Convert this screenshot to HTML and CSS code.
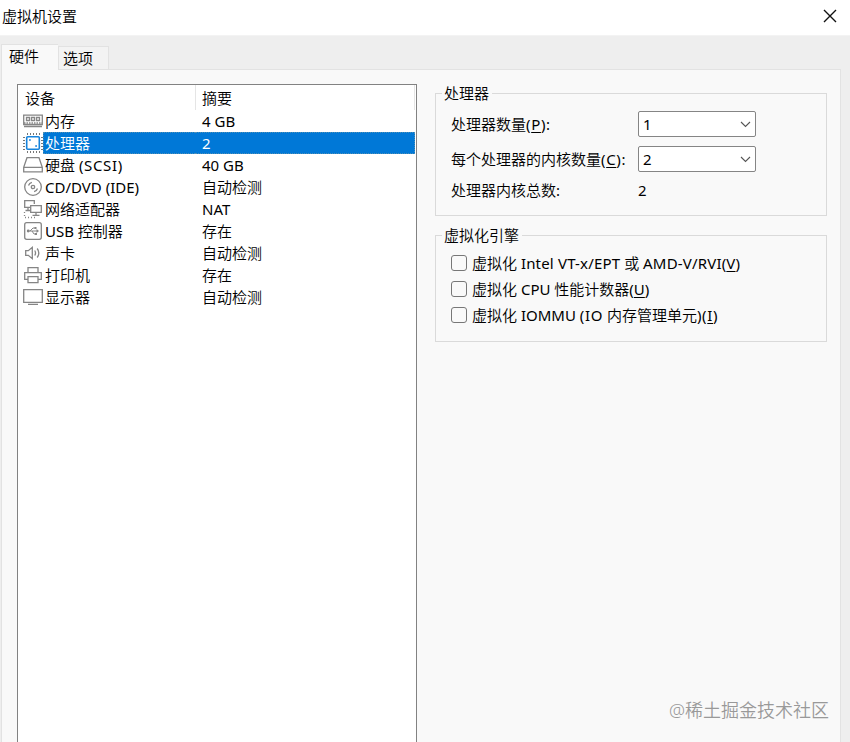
FILE: index.html
```
<!DOCTYPE html>
<html lang="zh-CN">
<head>
    <meta charset="UTF-8">
    <title>虚拟机设置</title>
    <link rel="stylesheet" href="styles.css">
</head>
<body>
<div class="titlebar">
    <span>虚拟机设置</span>
    <svg class="close" width="14" height="14" viewBox="0 0 14 14"><path d="M1 1l12 12M13 1L1 13"/></svg>
</div>

<div class="tabs">
    <div class="tab active">硬件</div>
    <div class="tab">选项</div>
</div>

<div class="panel">
    <!-- 左侧设备列表 -->
    <div class="devices">
        <div class="row head"><span class="name">设备</span><span class="info">摘要</span></div>
        <div class="row">
            <svg class="icon" width="20" height="20" viewBox="0 0 20 20"><path d="M.7 4.2h18.6v9.3H.7zM1 15.5h18" /><path d="M1 12h18" stroke-dasharray="1.5 1"/><path d="M3.5 6.5h3v3h-3zM8.5 6.5h3v3h-3zM13.5 6.5h3v3h-3z"/></svg>
            <span class="name">内存</span><span class="info"><b>4 GB</b></span>
        </div>
        <div class="row selected">
            <svg class="icon" width="20" height="20" viewBox="0 0 20 20"><path class="pins" d="M4.5 0v2M7.5 0v2M10.5 0v2M13.5 0v2M16.5 0v2M4.5 18v2M7.5 18v2M10.5 18v2M13.5 18v2M16.5 18v2M0 4.5h2M0 7.5h2M0 10.5h2M0 13.5h2M0 16.5h2M18 4.5h2M18 7.5h2M18 10.5h2M18 13.5h2M18 16.5h2"/><rect class="chip" x="3.7" y="3.7" width="12.6" height="12.6" rx="1"/><path class="chip" d="M6 7h1.8M12.2 13H14"/></svg>
            <span class="name">处理器</span><span class="info"><b>2</b></span>
        </div>
        <div class="row">
            <svg class="icon" width="20" height="20" viewBox="0 0 20 20"><path d="M4 2.7h12l3.3 9.6v4.5H.7v-4.5zM.7 12.3h18.6"/></svg>
            <span class="name">硬盘 <i>(SCSI)</i></span><span class="info"><b>40 GB</b></span>
        </div>
        <div class="row">
            <svg class="icon" width="20" height="20" viewBox="0 0 20 20"><circle cx="10" cy="10" r="8.3"/><circle cx="10" cy="10" r="1.7"/><path d="M5.5 8.5q.8-2.6 3.4-3.2M14.5 11.5q-.8 2.6-3.4 3.2"/></svg>
            <span class="name"><b>CD/DVD (IDE)</b></span><span class="info">自动检测</span>
        </div>
        <div class="row">
            <svg class="icon" width="20" height="20" viewBox="0 0 20 20"><path d="M7 8.3H1.7V1.7h9.6V5M5 8.5v3M2.5 11.5H7M7.7 6.7h10.6v6.6H7.7zM13 13.3V16M9.5 16.3h7"/><path class="dots" d="M1.5 13v5.5H13"/></svg>
            <span class="name">网络适配器</span><span class="info"><b>NAT</b></span>
        </div>
        <div class="row">
            <svg class="icon" width="20" height="20" viewBox="0 0 20 20"><rect x="1.7" y="1.7" width="16.6" height="16.6" rx="2"/><path d="M5 10h9M7 10l3-3h2M9 10l2 3h2" stroke-width="1"/><path class="fill" d="M13.5 8l2.5 2-2.5 2zM11.5 6h2v2h-2zM12 12h2v2h-2z"/><circle class="fill" cx="5.2" cy="10" r="1.4"/></svg>
            <span class="name"><b>USB</b> 控制器</span><span class="info">存在</span>
        </div>
        <div class="row">
            <svg class="icon" width="20" height="20" viewBox="0 0 20 20"><path d="M2.7 7.7h2.6l4-3.4v11.4l-4-3.4H2.7zM11.7 7.5q1.7 2.5 0 5M14.2 5.5q3.2 4.5 0 9"/></svg>
            <span class="name">声卡</span><span class="info">自动检测</span>
        </div>
        <div class="row">
            <svg class="icon" width="20" height="20" viewBox="0 0 20 20"><path d="M5 7.5V2.7h10v4.8M5 14.3H1.7V7.7h16.6v6.6H15M5 11.7h10v6H5z"/></svg>
            <span class="name">打印机</span><span class="info">存在</span>
        </div>
        <div class="row">
            <svg class="icon" width="20" height="20" viewBox="0 0 20 20"><path d="M.7 2.7h18.6v12.6H.7zM5 17.3h10"/></svg>
            <span class="name">显示器</span><span class="info">自动检测</span>
        </div>
    </div>

    <!-- 右侧处理器设置 -->
    <div class="settings">
        <fieldset class="group cpu">
            <legend>处理器</legend>
            <div class="field">
                <span class="label">处理器数量<i>(<u>P</u>):</i></span>
                <div class="select"><b>1</b><svg width="11" height="7" viewBox="0 0 11 7"><path d="M1 1l4.5 4.5L10 1"/></svg></div>
            </div>
            <div class="field">
                <span class="label">每个处理器的内核数量<i>(<u>C</u>):</i></span>
                <div class="select"><b>2</b><svg width="11" height="7" viewBox="0 0 11 7"><path d="M1 1l4.5 4.5L10 1"/></svg></div>
            </div>
            <div class="field total">
                <span class="label">处理器内核总数<b>:</b></span>
                <b>2</b>
            </div>
        </fieldset>
        <fieldset class="group virt">
            <legend>虚拟化引擎</legend>
            <div class="check"><span class="box"></span><span>虚拟化 <b class="wide">Intel VT-x/EPT</b> 或 <b class="wide">AMD-V/RVI(<u>V</u>)</b></span></div>
            <div class="check"><span class="box"></span><span>虚拟化 <b>CPU</b> 性能计数器<b>(<u>U</u>)</b></span></div>
            <div class="check"><span class="box"></span><span>虚拟化 <b>IOMMU</b> <i>(IO</i> 内存管理单元<i>)(<u>I</u>)</i></span></div>
        </fieldset>
    </div>
</div>
<div class="watermark">@稀土掘金技术社区</div>
</body>
</html>
```
FILE: styles.css
```
* {
    box-sizing: border-box;
}

body {
    display: flex;
    flex-direction: column;
    height: 742px;
    margin: 0;
    overflow: hidden;
    background: #eee;
    color: #000;
    font: 350 15px/22px "Noto Sans", "Noto Sans CJK SC", sans-serif;
    white-space: nowrap;
}

/* 西文用常规字重，括号部分字距稍宽 */
i, b {
    font-style: normal;
    font-weight: 400;
}

i {
    letter-spacing: .65px;
}

b.wide {
    letter-spacing: .18px;
}

u {
    text-underline-offset: 2px;
    text-decoration-thickness: 1px;
}

.titlebar {
    display: flex;
    flex: none;
    justify-content: space-between;
    height: 36px;
    padding: 5px 13px 0 2px;
    border-bottom: 1px solid #f3f3f3;
    background: #fff;
}

.close {
    margin-top: 4px;
    fill: none;
    stroke: #111;
    stroke-width: 1.4;
}

/* 标签页 */
.tabs {
    display: flex;
    flex: none;
    align-items: flex-end;
    height: 33px;
    padding-left: 1px;
}

.tab {
    width: 51px;
    height: 23px;
    padding-left: 4px;
    border: 1px solid #e2e2e2;
    border-bottom: 0;
    background: #f3f3f3;
}

.tab.active {
    z-index: 1;
    width: 57px;
    height: 26px;
    margin-bottom: -1px;
    padding-left: 7px;
    border-right: 0;
    background: #f9f9f9;
    line-height: 22px;
}

.panel {
    display: flex;
    flex: 1;
    width: 840px;
    margin-left: 1px;
    padding: 14px 12px 0 15px;
    border: 1px solid #e2e2e2;
    border-bottom: 0;
    background: #f9f9f9;
}

.devices {
    width: 400px;
    border: 1px solid #828282;
    border-bottom: 0;
    background: #fff;
}

.row {
    display: flex;
    height: 22px;
    padding-left: 5px;
}

.row .name {
    width: 152px;
    padding-left: 2px;
}

.row .info {
    flex: 1;
    padding-left: 7px;
}

.head {
    height: 25px;
    padding-right: 1px;
    line-height: 26px;
}

.row.head .name {
    width: 173px;
    border-right: 1px solid #e5e5e5;
}

.row.head .info {
    padding-left: 6px;
    border-right: 1px solid #e5e5e5;
}

.selected .name,
.selected .info {
    background: #0078d7;
    color: #fff;
    border: 1px dotted #4f8fb5;
    line-height: 20px;
}

.row.selected .name {
    padding-left: 1px;
    border-right: 0;
}

.selected .info {
    margin-right: 1px;
    border-left: 0;
}

.icon {
    flex: none;
    margin-top: 1px;
    fill: none;
    stroke: #858585;
    stroke-width: 1.3;
}

.icon .fill {
    fill: #858585;
    stroke: none;
}

.icon .pins {
    stroke: #777;
    stroke-width: 1;
}

.icon .chip {
    stroke: #1683dc;
    stroke-width: 1.6;
}

.icon .dots {
    stroke-dasharray: 1 2;
}

/* 设置分组 */
.settings {
    width: 392px;
    margin-left: 18px;
}

.group {
    min-width: 0;
    margin: 0;
    padding: 0 0 0 15px;
    border: 1px solid #dadada;
}

.group legend {
    height: 22px;
    margin-left: -9px;
    padding: 0 3px 0 2px;
}

.cpu {
    height: 134px;
    margin-top: -2px;
}

.virt {
    height: 118px;
    margin-top: 8px;
}

.field {
    display: flex;
    align-items: center;
    height: 26px;
    margin-bottom: 9px;
}

.cpu legend + .field {
    margin-top: 7px;
}

.label {
    width: 187px;
}

.total {
    margin-top: -4px;
}

.select {
    display: flex;
    align-items: center;
    justify-content: space-between;
    width: 118px;
    height: 26px;
    padding: 0 4px;
    border: 1px solid #858585;
    border-radius: 2px;
    background: #fff;
}

.select svg {
    fill: none;
    stroke: #555;
    stroke-width: 1.1;
}

.check {
    display: flex;
    align-items: center;
    gap: 5px;
    height: 26px;
}

.virt legend + .check {
    margin-top: 4px;
}

.box {
    width: 16px;
    height: 16px;
    border: 1px solid #777;
    border-radius: 3px;
}

.watermark {
    position: absolute;
    right: 21px;
    bottom: 21px;
    color: #999;
    font-size: 18px;
}
```
